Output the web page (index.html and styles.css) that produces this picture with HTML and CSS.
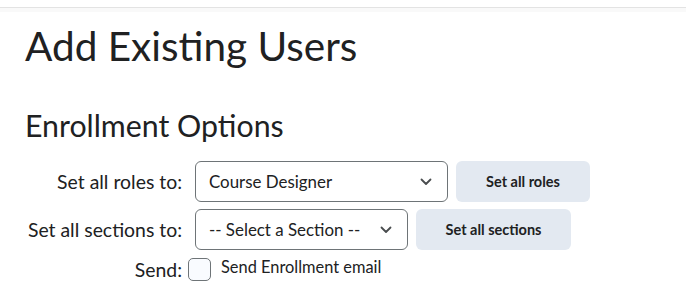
FILE: index.html
```html
<!DOCTYPE html>
<html lang="en">
<head>
    <meta charset="utf-8">
    <title>Add Existing Users</title>
    <link rel="stylesheet" href="styles.css">
</head>
<body>
    <div class="top-bar"></div>
    <main class="page">
        <h1 class="page-title">Add Existing Users</h1>
        <h2 class="section-title">Enrollment Options</h2>

        <div class="options">
            <div class="option-row">
                <label class="option-label" for="role-select">Set all roles to:</label>
                <div class="option-controls">
                    <div class="select-wrap select-role">
                        <select id="role-select" class="select">
                            <option>Course Designer</option>
                        </select>
                        <svg class="chevron" viewBox="0 0 12 8" width="12" height="8"><path d="M1.5 1.5 6 6l4.5-4.5" fill="none" stroke="#494c4e" stroke-width="1.8" stroke-linecap="round" stroke-linejoin="round"/></svg>
                    </div>
                    <button type="button" class="btn btn-roles">Set all roles</button>
                </div>
            </div>

            <div class="option-row">
                <label class="option-label" for="section-select">Set all sections to:</label>
                <div class="option-controls">
                    <div class="select-wrap select-section">
                        <select id="section-select" class="select">
                            <option>-- Select a Section --</option>
                        </select>
                        <svg class="chevron" viewBox="0 0 12 8" width="12" height="8"><path d="M1.5 1.5 6 6l4.5-4.5" fill="none" stroke="#494c4e" stroke-width="1.8" stroke-linecap="round" stroke-linejoin="round"/></svg>
                    </div>
                    <button type="button" class="btn btn-sections">Set all sections</button>
                </div>
            </div>

            <div class="option-row row-send">
                <span class="option-label">Send:</span>
                <label class="check">
                    <input type="checkbox" class="check-box">
                    <span class="check-text">Send Enrollment email</span>
                </label>
            </div>
        </div>
    </main>
</body>
</html>
```

FILE: styles.css
```css
* {
    margin: 0;
    padding: 0;
    box-sizing: border-box;
}

body {
    font-family: Lato, 'Noto Sans', sans-serif;
    color: #202122;
    background: #fff;
}

.top-bar {
    height: 12px;
    border-top: 7px solid #fff;
    border-bottom: 4px solid #f9f9f9;
    background: #e3e3e3;
}

.page {
    padding: 10px 25px 0;
}

.page-title {
    font-size: 40.5px;
    font-weight: 400;
    line-height: 48px;
    margin-bottom: 37px;
}

.section-title {
    font-size: 30.3px;
    font-weight: 400;
    line-height: 36px;
    margin-bottom: 18px;
}

.options {
    display: flex;
    flex-direction: column;
    gap: 7px;
}

.option-row {
    display: flex;
    align-items: center;
}

.option-label {
    width: 157px;
    text-align: right;
    font-size: 19.4px;
    margin-right: 13px;
}

.option-controls {
    display: flex;
    gap: 8px;
}

.select-wrap {
    position: relative;
}

.select {
    appearance: none;
    height: 41px;
    border: 1px solid #6e7477;
    border-radius: 6px;
    background: #fff;
    padding: 0 40px 0 13px;
    font-family: inherit;
    font-size: 16.9px;
    color: #202122;
}

.select-role .select {
    width: 253px;
}

.select-section .select {
    width: 213px;
}

.chevron {
    position: absolute;
    right: 16px;
    top: 17px;
    pointer-events: none;
}

.btn {
    height: 41px;
    border: none;
    border-radius: 6px;
    background: #e3e9f1;
    color: #202122;
    font-family: inherit;
    font-size: 14.5px;
    font-weight: 700;
}

.btn-roles {
    width: 134px;
}

.btn-sections {
    width: 155px;
}

.row-send {
    margin-top: 1px;
}

.row-send .option-label {
    margin-right: 6px;
}

.check {
    display: flex;
    align-items: flex-start;
    gap: 10px;
}

.check-box {
    appearance: none;
    width: 23px;
    height: 23px;
    border: 1px solid #6e7477;
    border-radius: 5px;
    background: #f9fbff;
}

.check-text {
    font-size: 16.4px;
    line-height: 20px;
    margin-top: -1px;
}
```
